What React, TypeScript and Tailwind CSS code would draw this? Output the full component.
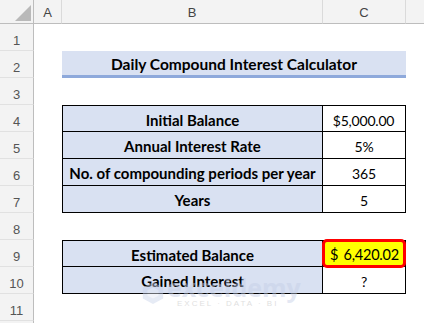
import React from "react";

const font = { fontFamily: "Lato, 'Open Sans', sans-serif" };

function RowNum({ n }: { n: number }) {
  return (
    <div className="flex items-end justify-center border-b border-r border-b-[#e1e1e1] border-r-[#bdbdbd] bg-[#f3f3f3] pb-[3px] text-[13px] leading-none text-[#555]" style={{ fontFamily: "'Liberation Sans', Arial, sans-serif" }}>
      {n}
    </div>
  );
}

export default function App() {
  const labelB = "relative z-0 flex items-center justify-center bg-[#d9e1f2] text-[15px] font-bold text-black pt-[3px]";
  const valC = "flex items-center justify-center bg-white text-[14px] tracking-[-0.2px] text-black pt-[3px]";
  return (
    <div className="relative h-[323px] w-[424px] overflow-hidden bg-white" style={font}>
      <div className="grid h-full" style={{ gridTemplateColumns: "34px 28px 261px 83px 1fr", gridTemplateRows: "24px repeat(11, 27px) 1fr" }}>
        {/* header row */}
        <div className="relative border-b border-r border-b-[#bdbdbd] border-r-[#bdbdbd] bg-[#f3f3f3]">
          <svg className="absolute right-[2px] bottom-[2px]" width="16" height="16" viewBox="0 0 16 16">
            <polygon points="16,0 16,16 0,16" fill="#b9b9b9" />
          </svg>
        </div>
        <div className="flex items-center justify-center border-b border-r border-b-[#bdbdbd] border-r-[#dadada] bg-[#f3f3f3] pt-[2px] text-[13px] text-[#444]" style={{ fontFamily: "'Liberation Sans', Arial, sans-serif" }}>A</div>
        <div className="flex items-center justify-center border-b border-r border-b-[#bdbdbd] border-r-[#dadada] bg-[#f3f3f3] pt-[2px] text-[13px] text-[#444]" style={{ fontFamily: "'Liberation Sans', Arial, sans-serif" }}>B</div>
        <div className="flex items-center justify-center border-b border-r border-b-[#bdbdbd] border-r-[#dadada] bg-[#f3f3f3] pt-[2px] text-[13px] text-[#444]" style={{ fontFamily: "'Liberation Sans', Arial, sans-serif" }}>C</div>
        <div className="border-b border-b-[#bdbdbd] bg-[#f3f3f3]" />

        {/* row 1 */}
        <RowNum n={1} />
        <div className="col-span-4" />

        {/* row 2 */}
        <RowNum n={2} />
        <div />
        <div className="col-span-2 flex items-center justify-center border-b-[3px] border-b-[#8ea9db] bg-[#d9e1f2] pt-[4px] text-[15.5px] font-bold text-black">
          Daily Compound Interest Calculator
        </div>
        <div />

        {/* row 3 */}
        <RowNum n={3} />
        <div className="col-span-4" />

        {/* row 4 */}
        <RowNum n={4} />
        <div />
        <div className={`${labelB} border border-black`}>Initial Balance</div>
        <div className={`${valC} justify-between border-y border-r border-black pl-[3px] pr-[4px]`}>
          <span>$</span>
          <span>5,000.00</span>
        </div>
        <div />

        {/* row 5 */}
        <RowNum n={5} />
        <div />
        <div className={`${labelB} border-x border-b border-black`}>Annual Interest Rate</div>
        <div className={`${valC} border-b border-r border-black`}>5%</div>
        <div />

        {/* row 6 */}
        <RowNum n={6} />
        <div />
        <div className={`${labelB} border-x border-b border-black`}>No. of compounding periods per year</div>
        <div className={`${valC} border-b border-r border-black`}>365</div>
        <div />

        {/* row 7 */}
        <RowNum n={7} />
        <div />
        <div className={`${labelB} border-x border-b border-black`}>Years</div>
        <div className={`${valC} border-b border-r border-black`}>5</div>
        <div />

        {/* row 8 */}
        <RowNum n={8} />
        <div className="col-span-4" />

        {/* row 9 */}
        <RowNum n={9} />
        <div />
        <div className={`${labelB} border border-black`}>Estimated Balance</div>
        <div className="relative border-y border-r border-black">
          <div className="absolute inset-x-[-1px] top-[-2px] bottom-[-2px] flex items-center justify-between rounded-[5px] border-[3px] border-[#ff0000] bg-[#ffff00] pl-[5px] pr-[4px] pt-[3px] text-[14.5px] tracking-[-0.2px] text-black">
            <span>$</span>
            <span>6,420.02</span>
          </div>
        </div>
        <div />

        {/* row 10 */}
        <RowNum n={10} />
        <div />
        <div className={`${labelB} border-x border-b border-black`}>
          <span className="relative z-10">Gained Interest</span>
        </div>
        <div className={`${valC} border-b border-r border-black`}>?</div>
        <div />

        {/* row 11 */}
        <RowNum n={11} />
        <div className="col-span-4" />

        <div className="bg-[#f3f3f3] border-r border-r-[#bdbdbd]" />
        <div className="col-span-4" />
      </div>

      {/* watermark */}
      <div className="pointer-events-none absolute left-[141px] top-[277px] flex items-center gap-[2px] opacity-45">
        <svg width="24" height="24" viewBox="0 0 26 26">
          <polygon points="13,1 24,7 24,19 13,25 2,19 2,7" fill="#c9d3ea" />
          <polygon points="13,7 19,10 19,16 13,19 7,16 7,10" fill="#e3e8f4" />
        </svg>
        <div className="flex flex-col items-start leading-none">
          <span className="text-[25px] font-bold text-[#c4cee6]" style={{ fontFamily: "'Open Sans', sans-serif", lineHeight: "20px" }}>exceldemy</span>
          <span className="mt-[3px] pl-[10px] text-[8px] tracking-[2px] text-[#bbbbbb]" style={{ fontFamily: "'Liberation Sans', sans-serif" }}>EXCEL · DATA · BI</span>
        </div>
      </div>
    </div>
  );
}
